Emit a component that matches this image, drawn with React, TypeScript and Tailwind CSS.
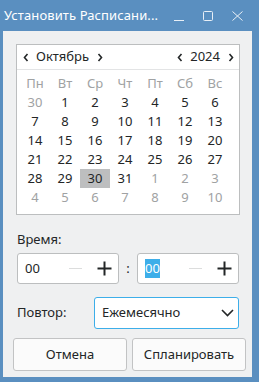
import React from 'react';

const weekDays = ['Пн', 'Вт', 'Ср', 'Чт', 'Пт', 'Сб', 'Вс'];

const days: { d: number; cur: boolean }[] = [
    { d: 30, cur: false },
    ...Array.from({ length: 31 }, (_, i) => ({ d: i + 1, cur: true })),
    ...Array.from({ length: 10 }, (_, i) => ({ d: i + 1, cur: false })),
];

function Chevron({ dir }: { dir: 'left' | 'right' }) {
    return (
        <svg width="6" height="9" viewBox="0 0 6 9" className="shrink-0">
            <path
                d={dir === 'left' ? 'M4.5 1 L1.5 4.5 L4.5 8' : 'M1.5 1 L4.5 4.5 L1.5 8'}
                fill="none"
                stroke="#232627"
                strokeWidth="1.6"
            />
        </svg>
    );
}

function SpinBox({ selected }: { selected?: boolean }) {
    return (
        <div className="flex h-[31px] w-[102px] items-center rounded-[3px] border border-[#bcbebf] bg-white pl-[7px]">
            <span
                className={
                    selected
                        ? 'flex h-[19px] items-center bg-[#3daee9] text-white'
                        : 'flex h-[19px] items-center text-[#232627]'
                }
            >
                00
            </span>
            <div className="ml-auto flex items-center gap-[15px] pr-[6px]">
                <div className="h-[1.5px] w-[13px] bg-[#dcdddd]" />
                <svg width="15" height="15" viewBox="0 0 15 15">
                    <path d="M7.5 0.5 V14.5 M0.5 7.5 H14.5" stroke="#232627" strokeWidth="2" />
                </svg>
            </div>
        </div>
    );
}

export default function App() {
    return (
        <div
            className="flex h-[382px] w-[259px] flex-col bg-[#5a8fc0] text-[13px] text-[#232627]"
            style={{ fontFamily: '"Noto Sans", "Open Sans", sans-serif' }}
        >
            {/* Title bar */}
            <div className="flex h-[31px] shrink-0 items-center pl-[4px] pr-[16px] text-white">
                <span className="text-[13px] leading-none tracking-[0.1px]">Установить Расписани...</span>
                <div className="ml-auto flex items-center">
                    <svg width="11" height="10" viewBox="0 0 11 10" className="mt-[1px]">
                        <path d="M0 9.5 H10" stroke="#e8eff6" strokeWidth="1" />
                    </svg>
                    <svg width="10" height="10" viewBox="0 0 10 10" className="ml-[18px]">
                        <rect x="0.5" y="0.5" width="9" height="9" rx="1" fill="none" stroke="#e8eff6" strokeWidth="1" />
                    </svg>
                    <svg width="11" height="10" viewBox="0 0 11 10" className="ml-[19px]">
                        <path d="M0.5 0.5 L10.5 9.5 M10.5 0.5 L0.5 9.5" stroke="#e8eff6" strokeWidth="1" />
                    </svg>
                </div>
            </div>

            {/* Content */}
            <div className="mb-[5px] ml-[3px] mr-[7px] flex flex-1 flex-col bg-[#eff0f1]">
                {/* Calendar */}
                <div className="ml-[13px] mt-[13px] flex h-[171px] w-[224px] flex-col border border-[#bcbebf] bg-white">
                    <div className="flex h-[25px] shrink-0 items-center border-b border-[#e3e4e5] pl-[6px] pr-[5px]">
                        <Chevron dir="left" />
                        <span className="ml-[7px]">Октябрь</span>
                        <span className="ml-[8px]">
                            <Chevron dir="right" />
                        </span>
                        <span className="ml-auto">
                            <Chevron dir="left" />
                        </span>
                        <span className="ml-[7px]">2024</span>
                        <span className="ml-[8px]">
                            <Chevron dir="right" />
                        </span>
                    </div>
                    <div className="grid grid-cols-[repeat(7,30px)] pl-[3px] pt-[4px]">
                        {weekDays.map((w) => (
                            <div key={w} className="flex h-[19px] items-center justify-center text-[#a0a2a3]">
                                {w}
                            </div>
                        ))}
                        {days.map((day, i) => (
                            <div
                                key={i}
                                className={
                                    day.cur && day.d === 30
                                        ? 'flex h-[19px] items-center justify-center bg-[#bdbebf] text-[#232627]'
                                        : day.cur
                                          ? 'flex h-[19px] items-center justify-center text-[#232627]'
                                          : 'flex h-[19px] items-center justify-center text-[#a0a2a3]'
                                }
                            >
                                {day.d}
                            </div>
                        ))}
                    </div>
                </div>

                {/* Time */}
                <div className="ml-[14px] mt-[15px] h-[18px] leading-[18px]">Время:</div>
                <div className="ml-[14px] mt-[5px] flex items-center">
                    <SpinBox />
                    <span className="w-[18px] text-center">:</span>
                    <SpinBox selected />
                </div>

                {/* Repeat */}
                <div className="ml-[14px] mt-[13px] flex items-center">
                    <span>Повтор:</span>
                    <div className="ml-auto mr-[13px] flex h-[32px] w-[145px] items-center rounded-[3px] border border-[#3daee9] bg-white pl-[7px] pr-[4px]">
                        <span>Ежемесячно</span>
                        <svg width="13" height="8" viewBox="0 0 13 8" className="ml-auto">
                            <path d="M1 1 L6.5 6.5 L12 1" fill="none" stroke="#232627" strokeWidth="1.6" />
                        </svg>
                    </div>
                </div>

                {/* Buttons */}
                <div className="ml-[10px] mt-[9px] flex gap-[5px]">
                    <button className="h-[33px] w-[114px] rounded-[3px] border border-[#c2c3c4] bg-[#fbfbfb] text-[#232627]">
                        Отмена
                    </button>
                    <button className="h-[33px] w-[114px] rounded-[3px] border border-[#c2c3c4] bg-[#fbfbfb] text-[#232627]">
                        Спланировать
                    </button>
                </div>
            </div>
        </div>
    );
}
